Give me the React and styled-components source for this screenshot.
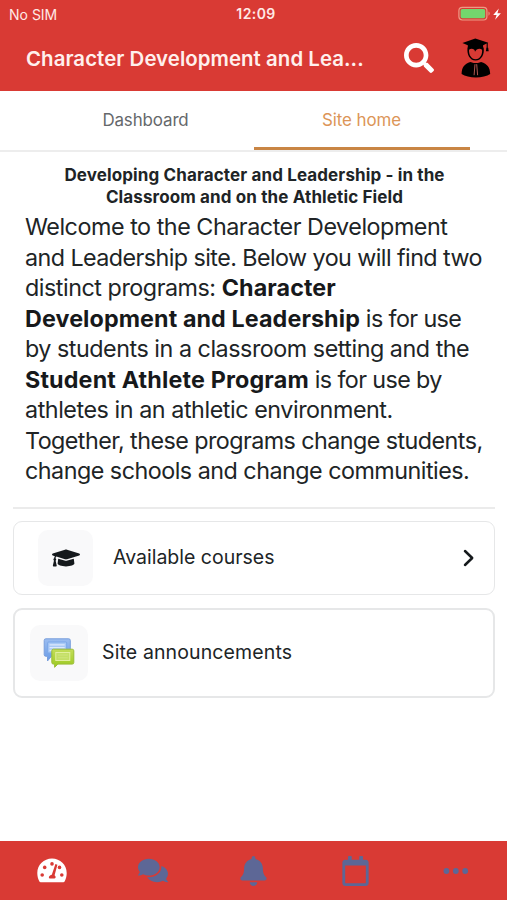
import React from "react";
import styled, { createGlobalStyle } from "styled-components";
import { FaSearch, FaComments, FaBell, FaRegCalendar, FaGraduationCap } from "react-icons/fa";

const red = "#d93a34";
const slate = "#5d6796";

const GlobalStyle = createGlobalStyle`
  * { box-sizing: border-box; }
  body { margin: 0; background: #fff; font-family: Inter, "Liberation Sans", sans-serif; color: #202426; }
  svg { display: block; flex: none; }
`;

const Screen = styled.div`
  width: 507px;
  height: 900px;
  display: flex;
  flex-direction: column;
  overflow: hidden;
`;

const Line = styled.span`
  display: block;
  white-space: nowrap;
  letter-spacing: ${(p) => p.$tracking || 0}px;
`;

const StatusBar = styled.div`
  height: 28px;
  flex: none;
  display: grid;
  grid-template-columns: 1fr auto 1fr;
  align-items: center;
  padding: 0 5px 0 9px;
  background: ${red};
  color: #ffe9e6;
  font-size: 14px;
`;

const Clock = styled.span`
  font-weight: 600;
  font-size: 14px;
  letter-spacing: 0.4px;
  padding-left: 1px;
  line-height: 16px;
`;

const StatusIcons = styled.div`
  display: flex;
  justify-content: flex-end;
`;

const Header = styled.header`
  height: 63px;
  flex: none;
  display: flex;
  align-items: center;
  background: ${red};
  color: #fff0ed;
  padding: 0 16px 3px 26px;
`;

const Title = styled.h1`
  margin: 0;
  flex: 1;
  font-size: 20.4px;
  font-weight: 600;
  line-height: 28px;
  padding-top: 2px;
`;

const SearchIcon = styled(FaSearch)`
  width: 30px;
  height: 30px;
  margin-right: 27px;
  color: #fff;
`;

const Tabs = styled.nav`
  height: 61px;
  flex: none;
  display: grid;
  grid-template-columns: 216px 216px;
  justify-content: center;
  border-bottom: 2px solid #ededed;
`;

const Tab = styled.div`
  height: 59px;
  display: flex;
  align-items: center;
  justify-content: center;
  padding-bottom: ${(p) => (p.$active ? "0" : "2px")};
  padding-top: ${(p) => (p.$active ? "1px" : "0")};
  font-size: 16.9px;
  color: ${(p) => (p.$active ? "#dc9557" : "#65686b")};
  border-bottom: ${(p) => (p.$active ? "3px solid #c98544" : "0")};
`;

const Main = styled.main`
  flex: 1;
  padding: 12px 12px 0 13px;
`;

const Heading = styled.h2`
  margin: 0;
  text-align: center;
  font-size: 17px;
  line-height: 22px;
  font-weight: 700;
  padding-left: 1px;
`;

const Intro = styled.p`
  margin: 4px 0 0 12px;
  font-size: 23.3px;
  line-height: 30.55px;
`;

const Bold = styled.strong`
  font-weight: 700;
  color: #17191b;
  letter-spacing: ${(p) => p.$tracking || 0}px;
`;

const Divider = styled.hr`
  margin: 20px 0 12px;
  border: 0;
  height: 2px;
  background: #ebebeb;
`;

const Card = styled.section`
  display: flex;
  align-items: center;
  width: 482px;
  height: ${(p) => p.$height}px;
  border: ${(p) => p.$border}px solid #e6e7e8;
  border-radius: 9px;
  padding: 0 19px 0 ${(p) => p.$inset}px;
  margin-bottom: 13px;
`;

const IconTile = styled.div`
  width: ${(p) => p.$size}px;
  height: 56px;
  flex: none;
  display: flex;
  align-items: center;
  justify-content: center;
  border-radius: 10px;
  background: #f9f9fa;
  color: #15191c;
`;

const CardLabel = styled.div`
  flex: 1;
  margin-left: ${(p) => p.$gap}px;
  font-size: 19.5px;
  line-height: 26px;
  padding-bottom: 1px;
`;

const BottomBar = styled.nav`
  height: 59px;
  flex: none;
  display: grid;
  grid-template-columns: repeat(5, 1fr);
  align-items: center;
  justify-items: center;
  background: ${red};
  color: ${slate};
  padding-left: 1px;
`;

const ChatIcon = styled(FaComments)`
  width: 30px;
  height: 27px;
`;
const BellIcon = styled(FaBell)`
  width: 27px;
  height: 30px;
`;
const CalendarIcon = styled(FaRegCalendar)`
  width: 27px;
  height: 30px;
`;

const Battery = () => (
  <svg width="44" height="16" viewBox="0 0 44 16">
    <rect x="0.9" y="1.4" width="28" height="12.6" rx="3.4" fill="none" stroke="#ed9a85" strokeWidth="1.2" />
    <rect x="2.6" y="3.1" width="24.6" height="9.2" rx="1.7" fill="#73d66d" />
    <path d="M30.5 5.6c1.6.7 1.6 3.4 0 4.1z" fill="#ed9a85" />
    <path d="M40.8 2.5 35.2 8.9h3.4l-1.5 4.8 5.8-6.5h-3.5z" fill="#fff" />
  </svg>
);

const Graduate = () => (
  <svg width="30" height="40" viewBox="0 0 30 40">
    <path d="M1.4 4.9 14.3.5l13 4.2-5.2 2.5v3.2c-4-1.6-11.3-1.6-15.3 0V7.3z" />
    <path d="M26.2 5v5.6" stroke="#000" strokeWidth="1.1" />
    <path d="M25.4 9.8h1.8l.5 3.4h-2.8z" />
    <path d="M6.6 9.6c-1.1 6.5 2 13 8 13s9.2-6.5 8-13c-4-1.5-12-1.5-16 0z" />
    <path d="M8 11.8c1.3-1 3.4-1.4 5-.2.7.6.9 1.3 1 2.2 1-2 2.5-3 4.4-3 1 0 2 .3 2.7 1 .4 5-2.1 9.4-6.5 9.5-4.4-.1-6.9-4.5-6.6-9.5z" fill={red} />
    <path d="M.6 36c.2-6.7 2.6-10 8.8-12l3.3 1h4.2l3.2-1c6.3 2 8.9 5.3 9.1 12-6.4 4.6-22.1 4.6-28.6 0z" />
    <path d="m14 26.2-.9 11M15.7 26.2l.9 11" fill="none" stroke="#dc6c64" strokeWidth=".8" />
  </svg>
);

const Gauge = () => (
  <svg width="30" height="25" viewBox="0 0 30 25">
    <path d="M15 .6C6.8.6.3 7 .3 15c0 3.2.7 6 2.1 8.5.3.5.7.7 1.3.7h22.6c.6 0 1-.2 1.3-.7 1.4-2.5 2.1-5.3 2.1-8.5C29.7 7 23.2.6 15 .6z" fill="#fff" />
    <g fill={red}>
      <circle cx="5.2" cy="17" r="1.8" />
      <circle cx="7.7" cy="9.4" r="1.8" />
      <circle cx="15" cy="5.9" r="1.8" />
      <circle cx="22.5" cy="9.4" r="1.8" />
      <circle cx="24.8" cy="17" r="1.8" />
      <path d="m18.4 6.1 2 .7-2.8 10.4c1.5 1.1 1.4 2.9-.1 3.3h-5c-1.4-1-.4-3.3 2.3-3.8z" />
    </g>
  </svg>
);

const Forum = () => (
  <svg width="32" height="32" viewBox="0 0 32 32">
    <defs>
      <linearGradient id="forumBlue" x1="0" y1="0" x2="0" y2="1">
        <stop stopColor="#9bbdf0" /><stop offset="1" stopColor="#699be6" />
      </linearGradient>
      <linearGradient id="forumGreen" x1="0" y1="0" x2="0" y2="1">
        <stop stopColor="#c3dd58" /><stop offset="1" stopColor="#9bc91f" />
      </linearGradient>
    </defs>
    <path d="M2.8 1.8h22.9q1.6 0 1.6 1.6v14.3q0 1.6-1.6 1.6H8.4L4.5 24v-4.7H2.8q-1.6 0-1.6-1.6V3.4q0-1.6 1.6-1.6z" fill="url(#forumBlue)" stroke="#799fdc" />
    <rect x="4.7" y="5" width="19" height="11" rx="1" fill="#a8c9f6" stroke="#7ba7e8" />
    <path d="M6.5 7.8h15.2M6.5 10.6h15.2M6.5 13.4h8" stroke="#dce8fc" strokeWidth="1.2" />
    <path d="M10.4 12.2h18.8q1.6 0 1.6 1.6v11.7q0 1.6-1.6 1.6H14.9l-3.3 3.2v-3.2h-1.2q-1.6 0-1.6-1.6V13.8q0-1.6 1.6-1.6z" fill="url(#forumGreen)" stroke="#9bbd38" />
    <rect x="12.8" y="15.5" width="14" height="8" fill="#c4df66" stroke="#e2ef9f" />
    <path d="M14.8 18h10M14.8 20.8h10" stroke="#cfe57c" />
  </svg>
);

const Chevron = () => (
  <svg width="12" height="18" viewBox="0 0 12 18">
    <path d="m2 2 7.2 7L2 16" fill="none" stroke="#15191c" strokeWidth="2.5" strokeLinecap="round" strokeLinejoin="round" />
  </svg>
);

const More = () => (
  <svg width="26" height="8" viewBox="0 0 26 8">
    <circle cx="3.4" cy="4" r="2.9" fill={slate} />
    <circle cx="12.8" cy="4" r="2.9" fill={slate} />
    <circle cx="22.2" cy="4" r="2.9" fill={slate} />
  </svg>
);

export default function App() {
  return (
    <Screen>
      <GlobalStyle />
      <StatusBar>
        <Line>No SIM</Line>
        <Clock>12:09</Clock>
        <StatusIcons><Battery /></StatusIcons>
      </StatusBar>
      <Header>
        <Title><Line $tracking={0.06}>Character Development and Lea...</Line></Title>
        <SearchIcon />
        <Graduate />
      </Header>
      <Tabs>
        <Tab><Line $tracking={-0.1}>Dashboard</Line></Tab>
        <Tab $active><Line $tracking={-0.05}>Site home</Line></Tab>
      </Tabs>
      <Main>
        <Heading>
          <Line $tracking={0.12}>Developing Character and Leadership - in the</Line>
          <Line $tracking={0.12}>Classroom and on the Athletic Field</Line>
        </Heading>
        <Intro>
          <Line $tracking={-0.46}>Welcome to the Character Development</Line>
          <Line $tracking={-0.56}>and Leadership site. Below you will find two</Line>
          <Line $tracking={-0.46}>distinct programs: <Bold $tracking={0.1}>Character</Bold></Line>
          <Line $tracking={-0.6}><Bold $tracking={0.1}>Development and Leadership</Bold> is for use</Line>
          <Line $tracking={-0.47}>by students in a classroom setting and the</Line>
          <Line $tracking={-0.6}><Bold $tracking={0.16}>Student Athlete Program</Bold> is for use by</Line>
          <Line $tracking={-0.44}>athletes in an athletic environment.</Line>
          <Line $tracking={-0.55}>Together, these programs change students,</Line>
          <Line $tracking={-0.5}>change schools and change communities.</Line>
        </Intro>
        <Divider />
        <Card $height={74} $border={1.5} $inset={24}>
          <IconTile $size={55}><FaGraduationCap size={28} /></IconTile>
          <CardLabel $gap={20}><Line>Available courses</Line></CardLabel>
          <Chevron />
        </Card>
        <Card $height={90} $border={2} $inset={15}>
          <IconTile $size={58}><Forum /></IconTile>
          <CardLabel $gap={14}><Line $tracking={0.12}>Site announcements</Line></CardLabel>
        </Card>
      </Main>
      <BottomBar>
        <Gauge />
        <ChatIcon />
        <BellIcon />
        <CalendarIcon />
        <More />
      </BottomBar>
    </Screen>
  );
}
